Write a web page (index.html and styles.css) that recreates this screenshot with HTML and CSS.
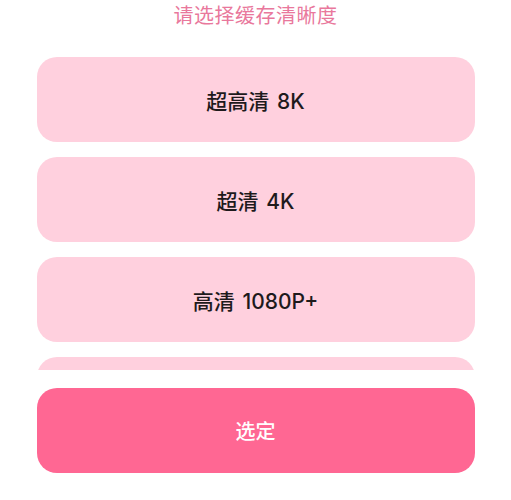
FILE: index.html
```html
<!DOCTYPE html>
<html lang="zh-CN">
<head>
<meta charset="utf-8">
<title>请选择缓存清晰度</title>
<link rel="stylesheet" href="styles.css">
</head>
<body>
<div class="sheet">
  <div class="title">请选择缓存清晰度</div>
  <div class="list">
    <div class="option">超高清 8K</div>
    <div class="option">超清 4K</div>
    <div class="option">高清 1080P+</div>
    <div class="option">高清 1080P</div>
  </div>
  <button class="confirm">选定</button>
</div>
</body>
</html>
```
FILE: styles.css
```css
html, body {
  margin: 0;
  padding: 0;
  background: #ffffff;
}
body {
  font-family: "Inter", "Noto Sans CJK SC", sans-serif;
}
.sheet {
  width: 438px;
  margin: 0 auto;
  display: flex;
  flex-direction: column;
}
.title {
  height: 32px;
  line-height: 32px;
  text-align: center;
  font-size: 20px;
  letter-spacing: 0.5px;
  color: #e9789c;
  margin-bottom: 25px;
}
.list {
  height: 313px;
  overflow: hidden;
  display: flex;
  flex-direction: column;
  gap: 15px;
}
.option {
  flex: none;
  height: 85px;
  border-radius: 20px;
  background: #ffd0de;
  color: #1e1a1c;
  font-size: 21px;
  font-weight: 500;
  word-spacing: 2px;
  display: flex;
  align-items: center;
  justify-content: center;
}
.confirm {
  margin-top: 18px;
  height: 85px;
  border: none;
  border-radius: 20px;
  background: #ff6793;
  color: #ffffff;
  font-family: inherit;
  font-size: 20px;
  font-weight: 500;
  padding: 0;
}
```
